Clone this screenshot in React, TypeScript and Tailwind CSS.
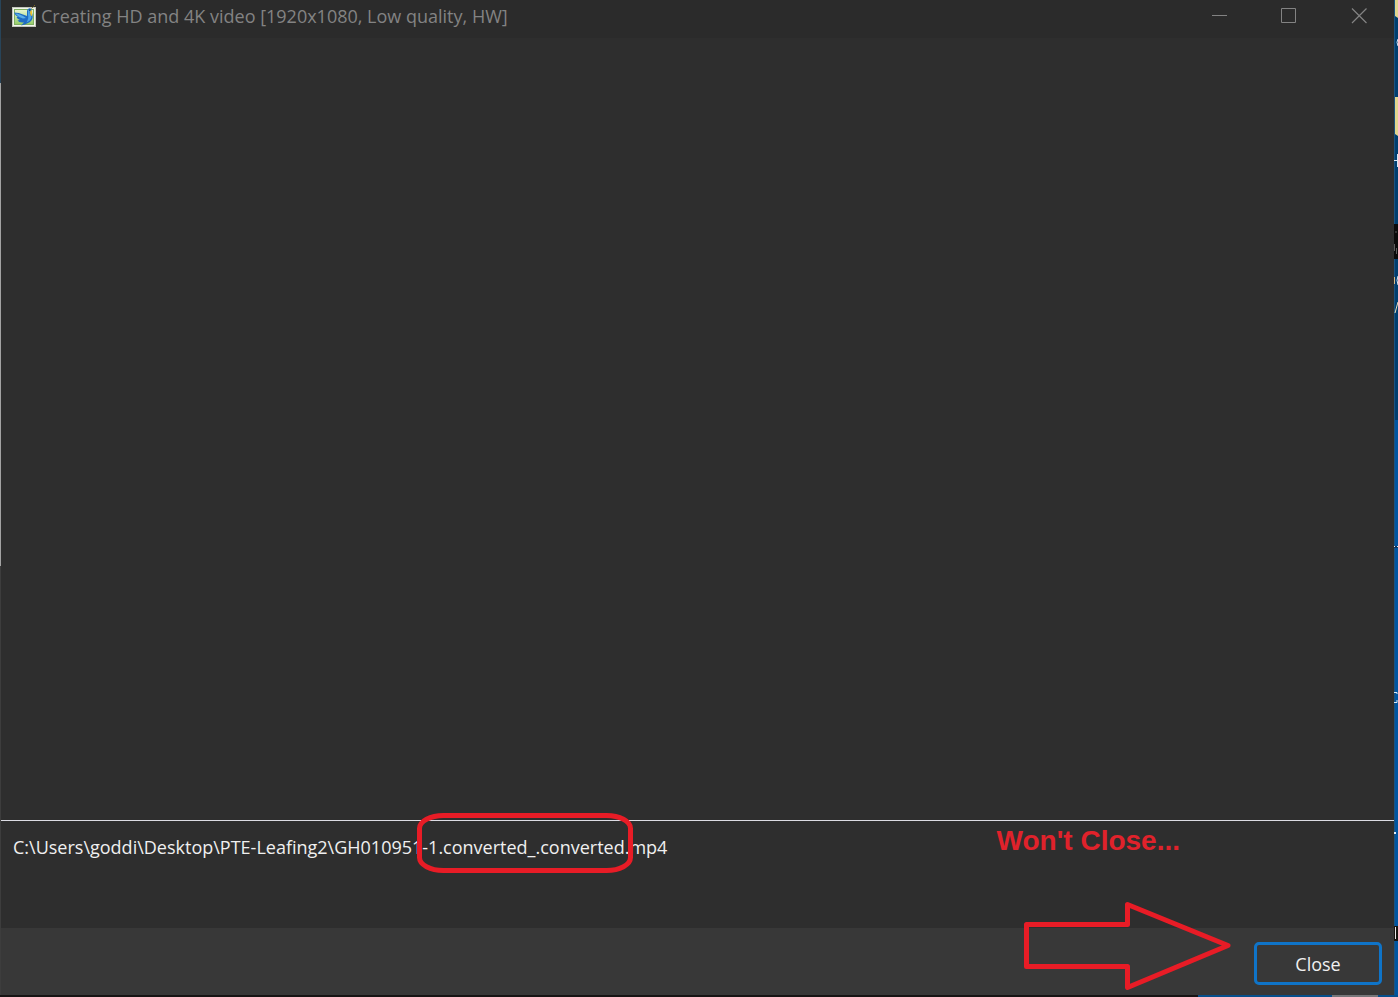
import { useId } from "react";

function AppIcon() {
  const id = useId();
  return (
    <svg viewBox="0 0 24 24" className="h-6 w-6 shrink-0" aria-hidden="true">
      <defs>
        <linearGradient id={id} x1="0" y1="0" x2="0" y2="1">
          <stop offset="0" stopColor="#e9f6d2" />
          <stop offset="1" stopColor="#93cc66" />
        </linearGradient>
      </defs>
      <rect x="0.5" y="3.5" width="23" height="19" fill="#f3f5ee" stroke="#c4c8be" />
      <rect x="2.500" y="5.500" width="19" height="15" fill={`url(#${id})`} stroke="#7fae62" />
      <path d="M2 8.500Q7 8.500 11 10.500L15 12L15 7Q15.500 4 18 4.300Q20 4.500 19.500 7L20.500 11Q21.500 15 18 18L13 20.500L9 21.500L12 18.500Q7 19 5.500 16.500L8 16Q5 15 4.500 13L6 13Q3 11.500 2 8.500Z" fill="#1f6cc4" />
      <path d="M3 9.500Q8 9.500 14 14L11 14.500Q6 13 3 9.500Z" fill="#5aaeea" />
      <path d="M16 7Q16 5 18 5.300L17.500 9L19.500 13Q18.500 17 14.500 18.500Q17 14 16 11Z" fill="#4ba2e6" />
      <path d="M18.500 6.500L20 6.500V11.500L19 12L18 9Z" fill="#f2c52e" />
      <path d="M19.500 4.500L23 1" stroke="#7a6722" strokeWidth="1" strokeDasharray="2 1" />
      <rect x="17" y="5.500" width="1.200" height="1.200" fill="#132c4d" />
    </svg>
  );
}

function TitleBar() {
  return (
    <header className="flex h-[38px] shrink-0 items-start justify-between bg-[#2b2b2b] pl-[11px] text-[#838383]">
      <div className="flex items-center gap-[5px] pt-1">
        <AppIcon />
        <h1 className="text-[18px] leading-6 whitespace-nowrap">
          Creating HD and 4K video [1920x1080, Low quality, HW]
        </h1>
      </div>
      <div className="flex">
        <button type="button" aria-label="Minimize" className="flex h-8 w-[70px] items-center justify-center">
          <svg viewBox="0 0 16 16" className="h-4 w-4" stroke="currentColor" fill="none">
            <path d="M1 7.500H16" />
          </svg>
        </button>
        <button type="button" aria-label="Maximize" className="flex h-8 w-[70px] items-center justify-center">
          <svg viewBox="0 0 16 16" className="h-4 w-4" stroke="currentColor" fill="none">
            <path d="M0.500 0.500H14.500V14.500H0.500Z" />
          </svg>
        </button>
        <button type="button" aria-label="Close window" className="flex h-8 w-[70px] items-center justify-center">
          <svg viewBox="0 0 16 16" className="h-4 w-4" stroke="currentColor" fill="none">
            <path d="M1 0.500L15.500 15M15.500 0.500L1 15" strokeWidth="1.200" />
          </svg>
        </button>
      </div>
    </header>
  );
}

function DesktopEdge() {
  return (
    <svg className="h-full w-1 shrink-0" viewBox="0 0 4 995" preserveAspectRatio="none" aria-hidden="true">
      <rect width="4" height="420" fill="#003e6e" />
      <rect y="420" width="4" height="575" fill="#0055a0" />
      <rect width="1" height="995" fill="#1c527f" />
      <path d="M1 0H4V18L1 16Z M1 97H4V136L1 134Z" fill="#e0d58e" />
      <path d="M4 39Q2 42 4 46" stroke="#d9e6f2" fill="none" />
      <path d="M0 160.500H4M3.500 154V167" stroke="#d9e6f2" fill="none" />
      <rect y="224" width="4" height="35" fill="#0b0b0b" />
      <path d="M0.500 244V251M2.500 248V254M1 232H3" stroke="#5d5d5d" fill="none" />
      <path d="M0.500 277V284" stroke="#d8b98a" />
      <path d="M4 276Q2 280 4 285" stroke="#d9e6f2" fill="none" />
      <path d="M4 302L1 313" stroke="#eadfba" fill="none" />
      <path d="M0 546h4v2H0Z" fill="#10355c" />
      <path d="M0 546h1v1H0Z M3 546h1v1H3Z M0 832h2v2H0Z" fill="#e5eef6" />
      <path d="M0 692.500H3V694M0 702.500H3V700" stroke="#dce8f2" fill="none" />
      <rect y="926" width="4" height="15" fill="#17130f" />
      <rect x="1" y="927" width="1" height="12" fill="#e6e6e6" />
    </svg>
  );
}

export default function App() {
  return (
    <div className="flex h-screen flex-col bg-[#171414] font-['Open_Sans','Noto_Sans',sans-serif]">
      <div className="flex min-h-0 flex-1">
        <div className="flex w-px shrink-0 flex-col" aria-hidden="true">
          <div className="h-[83px] bg-[#284459]" />
          <div className="h-[483px] bg-[#a3a3a3]" />
          <div className="flex-1 bg-[#3d3d3d]" />
        </div>
        <div className="flex min-w-0 flex-1 flex-col">
          <TitleBar />
          <main className="flex flex-1 flex-col bg-[#2e2e2e]">
            <div className="flex-1" />
            <section className="relative h-[108px] border-t border-[#dcdce4] px-3 pt-[14px] text-[#f0f0f0]">
              <p className="text-[18px] leading-6 whitespace-nowrap">
                C:\Users\goddi\Desktop\PTE-Leafing2\GH010951-1.converted_.converted.mp4
              </p>
              <svg
                viewBox="0 0 216 60"
                className="absolute -top-2 left-[416px] h-[60px] w-[216px]"
                fill="none"
                stroke="#e81c26"
                strokeWidth="5"
                aria-hidden="true"
              >
                <rect x="2.500" y="2.500" width="211" height="55" rx="24" ry="13" />
              </svg>
              <p className="absolute top-1 right-[214px] font-['Liberation_Sans',Arial,sans-serif] text-[28px] leading-8 font-bold whitespace-nowrap text-[#e0222b]">
                Won't Close...
              </p>
            </section>
          </main>
          <footer className="relative flex h-[67px] shrink-0 items-start justify-end bg-[#383838] pt-[14px] pr-3">
            <svg
              viewBox="0 0 208 90"
              className="absolute right-[163px] bottom-1 h-[90px] w-[208px]"
              fill="none"
              stroke="#e81c26"
              strokeWidth="5"
              strokeLinejoin="round"
              aria-hidden="true"
            >
              <path d="M3.500 23.500H104.500V3.500L205 44.500L104.500 86.500V65.500H3.500Z" />
            </svg>
            <button
              type="button"
              className="h-[43px] w-32 rounded-[5px] border-3 border-[#0f74c8] bg-[#383838] text-[18px] leading-6 text-[#f0f0f0]"
            >
              Close
            </button>
          </footer>
        </div>
        <DesktopEdge />
      </div>
      <div className="flex h-[2px] shrink-0" aria-hidden="true">
        <div className="flex-1" />
        <div className="w-[134px] bg-[#074f8c]" />
        <div className="w-[46px] bg-[#77777a]" />
        <div className="w-[20px] bg-[#074f8c]" />
      </div>
    </div>
  );
}
